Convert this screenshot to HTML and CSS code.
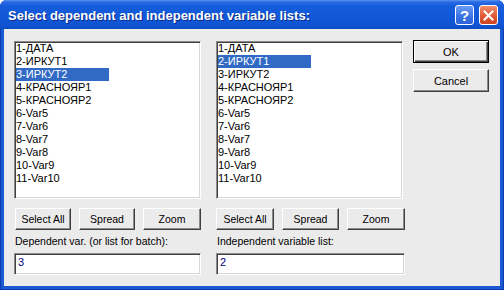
FILE: index.html
```html
<!DOCTYPE html>
<html lang="ru">
<head>
    <meta charset="UTF-8">
    <title>Select dependent and independent variable lists</title>
    <link rel="stylesheet" href="styles.css">
</head>
<body>
    <div class="window">
        <div class="titlebar">
            <span class="title">Select dependent and independent variable lists:</span>
            <div class="caption-buttons">
                <span class="cap help">?</span>
                <span class="cap close">
                    <svg width="11" height="11" viewBox="0 0 11 11">
                        <path d="M1.5 1.5 L9.5 9.5 M9.5 1.5 L1.5 9.5" stroke="#fff" stroke-width="2" stroke-linecap="square"/>
                    </svg>
                </span>
            </div>
        </div>

        <div class="client">
            <div class="column">
                <div class="listbox">
                    <div class="item">1-ДАТА</div>
                    <div class="item">2-ИРКУТ1</div>
                    <div class="item selected">3-ИРКУТ2</div>
                    <div class="item">4-КРАСНОЯР1</div>
                    <div class="item">5-КРАСНОЯР2</div>
                    <div class="item">6-Var5</div>
                    <div class="item">7-Var6</div>
                    <div class="item">8-Var7</div>
                    <div class="item">9-Var8</div>
                    <div class="item">10-Var9</div>
                    <div class="item">11-Var10</div>
                </div>
                <div class="btn-row first">
                    <button class="btn w56">Select All</button>
                    <button class="btn w56">Spread</button>
                    <button class="btn w58">Zoom</button>
                </div>
                <div class="field-label">Dependent var. (or list for batch):</div>
                <div class="textbox">3</div>
            </div>

            <div class="column second">
                <div class="listbox">
                    <div class="item">1-ДАТА</div>
                    <div class="item selected">2-ИРКУТ1</div>
                    <div class="item">3-ИРКУТ2</div>
                    <div class="item">4-КРАСНОЯР1</div>
                    <div class="item">5-КРАСНОЯР2</div>
                    <div class="item">6-Var5</div>
                    <div class="item">7-Var6</div>
                    <div class="item">8-Var7</div>
                    <div class="item">9-Var8</div>
                    <div class="item">10-Var9</div>
                    <div class="item">11-Var10</div>
                </div>
                <div class="btn-row">
                    <button class="btn w58">Select All</button>
                    <button class="btn w57">Spread</button>
                    <button class="btn w58">Zoom</button>
                </div>
                <div class="field-label">Independent variable list:</div>
                <div class="textbox">2</div>
            </div>

            <div class="side-buttons">
                <button class="btn side default">OK</button>
                <button class="btn side">Cancel</button>
            </div>
        </div>
    </div>
</body>
</html>
```

FILE: styles.css
```css
* {
    margin: 0;
    padding: 0;
    box-sizing: border-box;
}

body {
    background: #ffffff;
    font-family: 'Liberation Sans', Arial, sans-serif;
}

.window {
    width: 504px;
    height: 290px;
    display: flex;
    flex-direction: column;
    padding: 0 4px 4px;
    background: #1a58d4;
    border-radius: 7px 7px 0 0;
    box-shadow: inset 1px 0 0 #0a3cb0, inset -1px 0 0 #0a3cb0, inset 0 -1px 0 #0a3cb0;
}

/* title bar */
.titlebar {
    height: 29px;
    margin: 0 -4px;
    padding: 0 6px 0 8px;
    display: flex;
    justify-content: space-between;
    align-items: flex-start;
    border-radius: 7px 7px 0 0;
    background: linear-gradient(#5c94f0 0, #2a6ae4 2px, #165ddc 6px, #1158d8 18px, #0f53d0 26px, #0c4cc4 29px);
}

.title {
    padding-top: 8px;
    font-size: 13px;
    font-weight: bold;
    line-height: 15px;
    color: #ffffff;
    text-shadow: 1px 1px 0 #0a2a86;
    white-space: nowrap;
}

.caption-buttons {
    display: flex;
    gap: 5px;
    margin-top: 5px;
}

.cap {
    width: 19px;
    height: 20px;
    border: 1px solid #ffffff;
    border-radius: 3px;
    display: flex;
    align-items: center;
    justify-content: center;
}

.help {
    background: linear-gradient(#6c9cf4, #3a72e4 60%, #2c62d8);
    color: #ffffff;
    font-size: 15px;
    font-weight: bold;
}

.close {
    background: linear-gradient(#f08c6c, #e05a36 55%, #cc4420);
}

/* dialog body */
.client {
    flex: 1;
    display: flex;
    padding: 12px 0 0 10px;
    background: #ecebec;
}

.column {
    width: 187px;
    margin-right: 15px;
    display: flex;
    flex-direction: column;
}

.column.second {
    width: 189px;
    margin-right: 8px;
}

.listbox {
    width: 187px;
    height: 158px;
    padding-left: 1px;
    background: #ffffff;
    border: 1px solid;
    border-color: #8c8a8c #ffffff #ffffff #8c8a8c;
    box-shadow: inset 1px 1px 0 #404040, inset -1px -1px 0 #d8d6d8;
}

.item {
    width: 93px;
    height: 13px;
    font-size: 11px;
    line-height: 13px;
    color: #000000;
    white-space: nowrap;
}

.item.selected {
    background: #316ac5;
    color: #ffffff;
}

.btn-row {
    display: flex;
    gap: 8px;
    margin-top: 9px;
}

.btn-row.first {
    padding-left: 1px;
}

.btn {
    height: 22px;
    font-family: 'Liberation Sans', Arial, sans-serif;
    font-size: 10.5px;
    font-weight: normal;
    color: #000000;
    background: #ecebec;
    border: 1px solid;
    border-color: #ffffff #404040 #404040 #ffffff;
    box-shadow: inset -1px -1px 0 #8c8a8c;
}

.w56 { width: 56px; }
.w57 { width: 57px; }
.w58 { width: 58px; }

.field-label {
    margin-top: 5px;
    padding-left: 1px;
    font-size: 10.5px;
    line-height: 13px;
    color: #000000;
    white-space: nowrap;
}

.textbox {
    margin-top: 5px;
    height: 22px;
    padding-left: 3px;
    font-size: 11px;
    line-height: 16px;
    color: #000080;
    background: #ffffff;
    border: 1px solid;
    border-color: #8c8a8c #ffffff #ffffff #8c8a8c;
    box-shadow: inset 1px 1px 0 #404040, inset -1px -1px 0 #d8d6d8;
}

.side-buttons {
    display: flex;
    flex-direction: column;
    gap: 6px;
    margin-top: -1px;
}

.btn.side {
    width: 76px;
    height: 23px;
    font-size: 11px;
}

.btn.default {
    border: 1px solid #000000;
    box-shadow: inset 1px 1px 0 #ffffff, inset -1px -1px 0 #404040, inset -2px -2px 0 #8c8a8c;
}
```
